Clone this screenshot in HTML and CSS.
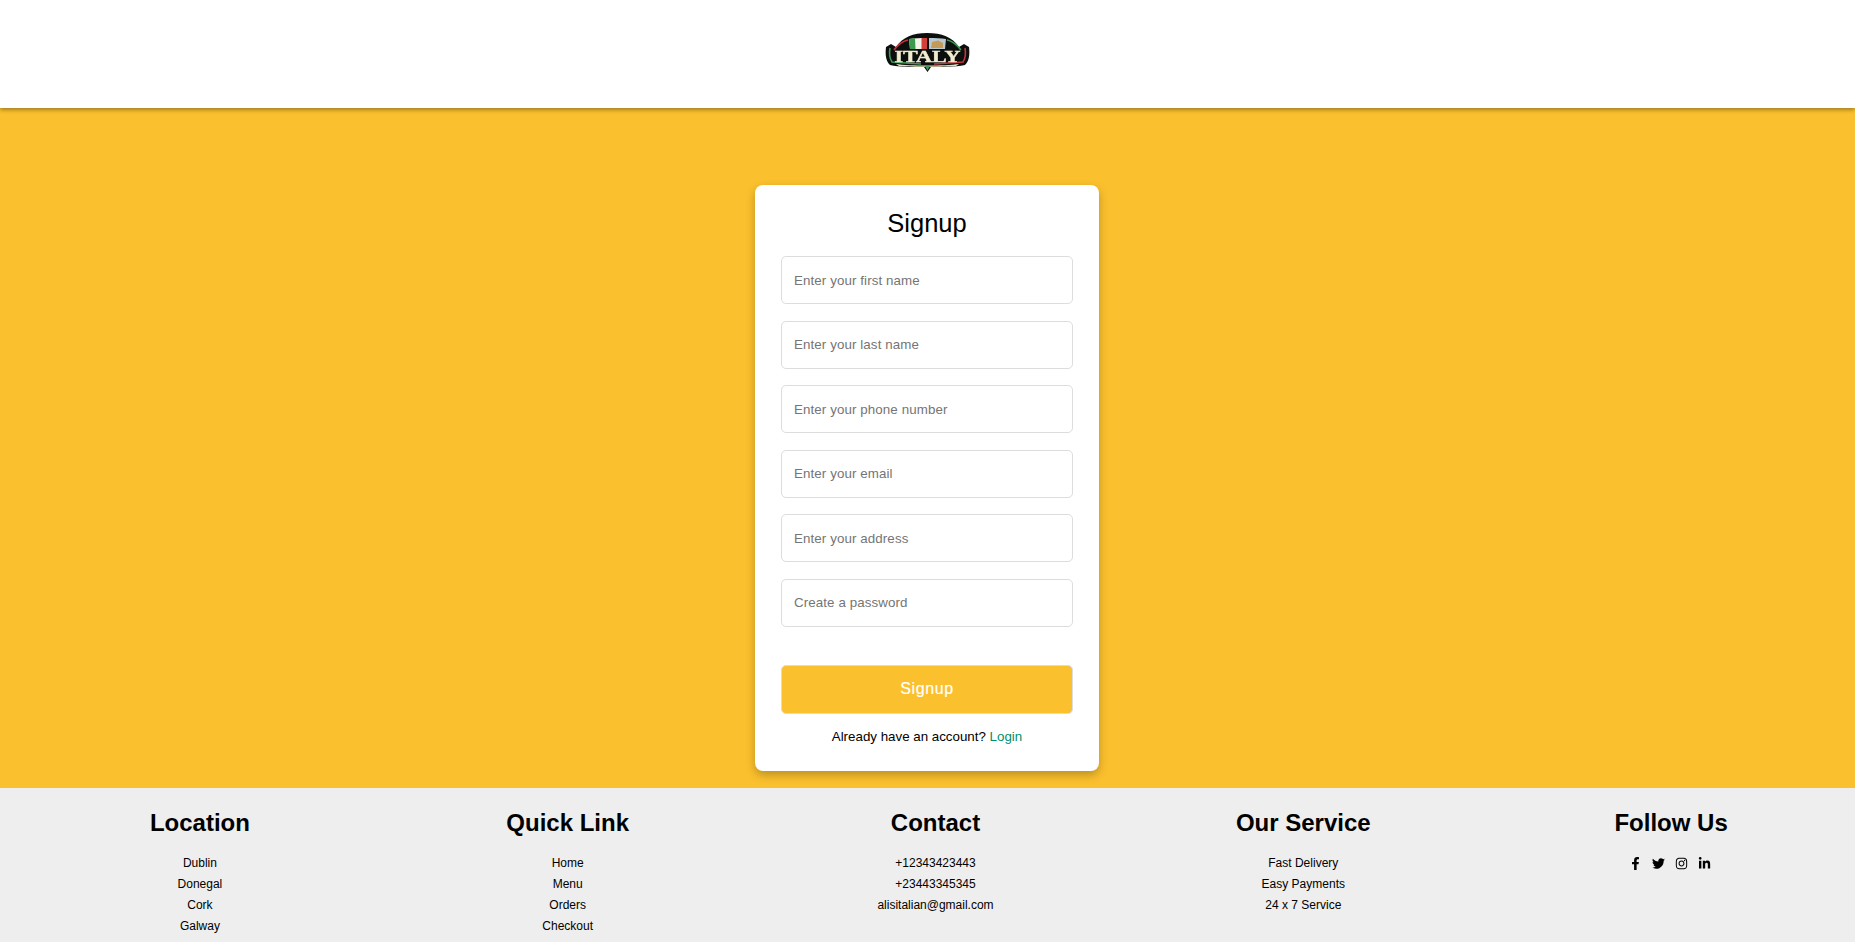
FILE: index.html
```html
<!DOCTYPE html>
<html lang="en">
<head>
    <meta charset="UTF-8">
    <meta name="viewport" content="width=device-width, initial-scale=1.0">
    <title>Signup</title>
    <link rel="stylesheet" href="styles.css">
</head>
<body>
    <header class="header">
        <svg class="logo" viewBox="0 0 85 39" width="85" height="39">
            <path d="M1 14 L6 11 L11 14 C18 4 28 0 42 0 C57 0 67 4 74 14 L79 11 L84 14 C85 22 84 28 80 32 C70 34 55 34 46 34 L42.500 39 L39 34 C28 34 14 34 5 32 C1 28 0 22 1 14 Z" fill="#0d0f0e"/>
            <path class="logo-line" d="M5 15 C4 21 5 26 7 29 L36 31" stroke="#3a9a55"/>
            <path class="logo-line" d="M80 15 C81 21 80 26 78 29 L49 31" stroke="#c8343a"/>
            <path class="logo-line" d="M9 17 C13 12 18 8 23 7" stroke="#c8343a"/>
            <path class="logo-line" d="M76 17 C72 12 67 8 62 7" stroke="#3a9a55"/>
            <path d="M24 6 C29 5 35 5 42 5 L42 16 L25 16 Z" fill="#f4f2ea"/>
            <path d="M24 6 L30 5.300 L30.500 16 L25 16 Z" fill="#3c9a4e"/>
            <path d="M36.500 5 L42 5 L42 16 L36.500 16 Z" fill="#d2403c"/>
            <path d="M44 5 C50 5 56 5 61 6 L60 16 L44 16 Z" fill="#b9c9cf"/>
            <path d="M46 15 L47 9 L53 7.500 L58 10 L58 15 Z" fill="#c49a5a"/>
            <path d="M11 31 C24 33 60 33 74 31 L71 33 C58 34 27 34 14 33 Z" fill="#e4dfb4"/>
            <path d="M40 33 L45 33 L42.500 37.500 Z" fill="#3f9c52"/>
            <text class="logo-text" x="42.500" y="28.500" textLength="66" lengthAdjust="spacingAndGlyphs">ITALY</text>
        </svg>
    </header>

    <main class="main">
        <form class="card">
            <h1 class="card-title">Signup</h1>
            <input class="field" type="text" placeholder="Enter your first name">
            <input class="field" type="text" placeholder="Enter your last name">
            <input class="field" type="text" placeholder="Enter your phone number">
            <input class="field" type="email" placeholder="Enter your email">
            <input class="field" type="text" placeholder="Enter your address">
            <input class="field" type="password" placeholder="Create a password">
            <button class="submit" type="button">Signup</button>
            <p class="switch">Already have an account? <a class="switch-link" href="#">Login</a></p>
        </form>
    </main>

    <footer class="footer">
        <div class="footer-col">
            <h2 class="footer-title">Location</h2>
            <ul class="footer-list">
                <li>Dublin</li>
                <li>Donegal</li>
                <li>Cork</li>
                <li>Galway</li>
            </ul>
        </div>
        <div class="footer-col">
            <h2 class="footer-title">Quick Link</h2>
            <ul class="footer-list">
                <li>Home</li>
                <li>Menu</li>
                <li>Orders</li>
                <li>Checkout</li>
            </ul>
        </div>
        <div class="footer-col">
            <h2 class="footer-title">Contact</h2>
            <ul class="footer-list">
                <li>+12343423443</li>
                <li>+23443345345</li>
                <li>alisitalian@gmail.com</li>
            </ul>
        </div>
        <div class="footer-col">
            <h2 class="footer-title">Our Service</h2>
            <ul class="footer-list">
                <li>Fast Delivery</li>
                <li>Easy Payments</li>
                <li>24 x 7 Service</li>
            </ul>
        </div>
        <div class="footer-col">
            <h2 class="footer-title">Follow Us</h2>
            <div class="socials">
                <svg class="social" viewBox="0 0 320 512"><path d="M279 288l14-93h-89v-60c0-25 12-50 52-50h41V6s-37-6-72-6c-73 0-121 44-121 125v70H23v93h81v224h100V288z"/></svg>
                <svg class="social" viewBox="0 0 512 512"><path d="M459 152c.3 4.500.3 9 .3 13.500 0 139-106 299-299 299-59 0-115-17-161-47 8 1 16 1 25 1 49 0 94-17 130-45-46-1-85-31-98-73 6 1 13 2 20 2 9 0 19-1 28-4-48-10-84-52-84-103v-1c14 8 30 13 47 13-28-19-47-51-47-87 0-19 5-37 14-53 52 64 129 105 216 110-2-8-3-16-3-24 0-58 47-105 105-105 30 0 58 13 77 33 24-5 47-14 67-26-8 25-25 46-46 59 21-2 42-8 60-16-14 21-32 39-52 54z"/></svg>
                <svg class="social" viewBox="0 0 448 512"><path d="M224 141c-64 0-115 51-115 115s51 115 115 115 115-51 115-115-51-115-115-115zm0 190c-41 0-75-34-75-75s34-75 75-75 75 34 75 75-34 75-75 75zm147-194c0 15-12 27-27 27s-27-12-27-27 12-27 27-27 27 12 27 27zm76 27c-2-36-10-68-36-94s-58-34-94-36c-37-2-148-2-185 0-36 2-68 10-94 36S4 128 2 164c-2 37-2 148 0 185 2 36 10 68 36 94s58 34 94 36c37 2 148 2 185 0 36-2 68-10 94-36s34-58 36-94c2-37 2-148 0-185zm-48 225c-8 20-23 35-43 43-30 12-100 9-132 9s-103 3-132-9c-20-8-35-23-43-43-12-30-9-100-9-132s-3-103 9-132c8-20 23-35 43-43 30-12 100-9 132-9s103-3 132 9c20 8 35 23 43 43 12 30 9 100 9 132s3 103-9 132z"/></svg>
                <svg class="social" viewBox="0 0 448 512"><path d="M100 448H7V149h93zM54 108C24 108 0 83 0 54a54 54 0 0 1 108 0c0 29-24 54-54 54zm394 340h-93V302c0-35-1-79-48-79-48 0-56 38-56 77v148h-93V149h89v41h1c12-24 43-48 88-48 94 0 111 62 111 142v164z"/></svg>
            </div>
        </div>
    </footer>
</body>
</html>
```

FILE: styles.css
```css
* {
    box-sizing: border-box;
}
body {
    margin: 0;
    font-family: "Liberation Sans", Arial, sans-serif;
    color: #000;
    background-color: #fbc02d;
    overflow: hidden;
}
.header {
    height: 108px;
    display: flex;
    justify-content: center;
    padding: 33px 1px 0 0;
    background-color: #fff;
    box-shadow: 0 2px 4px rgba(0, 0, 0, 0.35);
    position: relative;
}
.logo {
    display: block;
    filter: blur(0.4px);
}
.logo-line {
    fill: none;
    stroke-width: 1.6;
}
.logo-text {
    font-family: "Liberation Serif", serif;
    font-weight: 700;
    font-size: 16px;
    text-anchor: middle;
    fill: #f1edcf;
    stroke: #f1edcf;
    stroke-width: 0.4px;
}
.main {
    height: 680px;
    display: flex;
    justify-content: center;
    padding: 77px 1px 0 0;
}
.card {
    width: 344px;
    height: 586px;
    padding: 20px 26px;
    display: flex;
    flex-direction: column;
    background-color: #fff;
    border-radius: 8px;
    box-shadow: 0 4px 10px rgba(0, 0, 0, 0.25);
}
.card-title {
    margin: 2px 0 17px;
    font-size: 25.500px;
    font-weight: 400;
    line-height: 32px;
    text-align: center;
}
.field {
    height: 48px;
    margin-bottom: 16.6px;
    padding: 0 12px;
    border: 1px solid #ddd;
    border-radius: 5px;
    font-family: inherit;
    font-size: 13.330px;
    letter-spacing: 0.1px;
}
.field::placeholder {
    color: #757575;
}
.submit {
    height: 49px;
    margin-top: 21px;
    border: 1px solid #ddd;
    border-radius: 5px;
    background-color: #fbc02d;
    color: #fff;
    font-family: inherit;
    font-size: 16px;
    letter-spacing: 0.6px;
    -webkit-text-stroke: 0.2px #fff;
}
.switch {
    margin: 14px 0 0;
    font-size: 13.330px;
    line-height: 18px;
    text-align: center;
}
.switch-link {
    color: #00906a;
    text-decoration: none;
}
.footer {
    height: 154px;
    padding: 21px 0 0 16px;
    display: grid;
    grid-template-columns: repeat(5, 1fr);
    background-color: #eee;
    text-align: center;
}
.footer-title {
    margin: 0 0 16px;
    font-size: 24px;
    line-height: 28px;
}
.footer-list {
    margin: 0;
    padding: 0;
    list-style: none;
    font-size: 12px;
    line-height: 21px;
}
.socials {
    height: 21px;
    display: flex;
    justify-content: center;
    align-items: center;
    gap: 10px;
    padding-right: 2px;
}
.social {
    width: 13px;
    height: 13px;
}
```
